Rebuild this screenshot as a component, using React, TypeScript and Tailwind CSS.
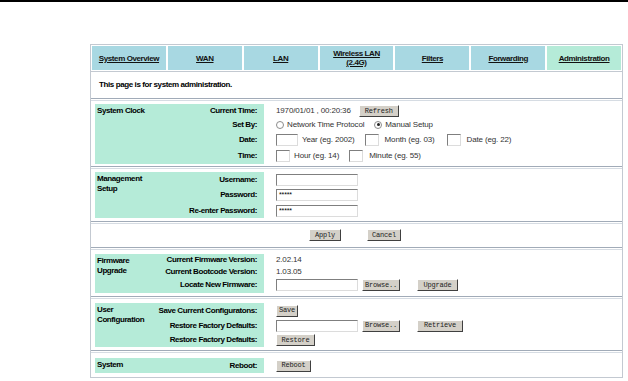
import React from 'react';

type Row = { label: string; h: string; content: React.ReactNode };

const sans = "font-['Liberation_Sans',Arial,sans-serif]";

const Input = ({ w }: { w: string }) => (
  <div className={`${w} h-[12px] bg-white border border-[#7f7f7f] border-b-[#dcdcdc] border-r-[#dcdcdc]`} />
);

const Btn = ({ w, children }: { w: string; children: React.ReactNode }) => (
  <div
    className={`${w} h-[12px] flex items-center justify-center bg-[#d4d0c8] border border-white border-b-[#404040] border-r-[#404040] font-['Liberation_Mono',monospace] text-[7px] leading-none text-[#222] tracking-[-0.2px]`}
  >
    {children}
  </div>
);

const Radio = ({ checked }: { checked?: boolean }) => (
  <span className="w-[8px] h-[8px] rounded-full bg-white border border-[#8c8c8c] flex items-center justify-center">
    {checked && <span className="w-[3px] h-[3px] rounded-full bg-[#222]" />}
  </span>
);

const Sep = () => <div className="h-[3px] border-y border-t-[#a1abb8] border-b-[#d6dce3]" />;

const Section = ({ title, rows, pad }: { title: React.ReactNode; rows: Row[]; pad: string }) => (
  <div className={`flex pl-[4px] ${pad}`}>
    <div className="flex w-[169px] bg-[#b5ebd8]">
      <div className="w-[62px] shrink-0 pl-[2px] pt-[2px] leading-[10px] font-bold text-black">{title}</div>
      <div className="flex-1 min-w-0 flex flex-col pr-[7px]">
        {rows.map((r, i) => (
          <div key={i} className={`${r.h} flex items-center justify-end whitespace-nowrap font-bold text-black`}>
            {r.label}
          </div>
        ))}
      </div>
    </div>
    <div className="flex flex-col pl-[12px]">
      {rows.map((r, i) => (
        <div key={i} className={`${r.h} flex items-center gap-[4px] whitespace-nowrap text-[#333] tracking-[-0.15px]`}>
          {r.content}
        </div>
      ))}
    </div>
  </div>
);

const tabs: { label: React.ReactNode; active?: boolean }[] = [
  { label: 'System Overview' },
  { label: 'WAN' },
  { label: 'LAN' },
  { label: <>Wireless LAN<br />(2.4G)</> },
  { label: 'Filters' },
  { label: 'Forwarding' },
  { label: 'Administration', active: true },
];

export default function App() {
  return (
    <div className={`w-[628px] h-[381px] bg-white overflow-hidden ${sans} text-[8px] tracking-[-0.4px]`}>
      <div className="h-[2px] bg-black" />

      <div className="mt-[42px] ml-[90px] w-[533px]">
        {/* tab bar */}
        <div className="flex h-[28px] border border-[#c3c9d1] bg-white p-px gap-[2px]">
          {tabs.map((t, i) => (
            <div
              key={i}
              className={`flex-1 flex items-center justify-center text-center leading-[9px] font-bold underline text-[#111] ${
                t.active ? 'bg-[#b5ebd8]' : 'bg-[#a8d8e2]'
              }`}
            >
              {t.label}
            </div>
          ))}
        </div>

        <div className="border-x border-b border-[#c3c9d1]">
          <div className="h-[26px] flex items-center pl-[8px] font-bold text-black">
            This page is for system administration.
          </div>
          <Sep />

          <Section
            pad="pt-[3px] pb-[2px]"
            title="System Clock"
            rows={[
              {
                label: 'Current Time:',
                h: 'h-[14px]',
                content: (
                  <>
                    <span>1970/01/01 , 00:20:36</span>
                    <span className="ml-[4px]">
                      <Btn w="w-[40px]">Refresh</Btn>
                    </span>
                  </>
                ),
              },
              {
                label: 'Set By:',
                h: 'h-[13px]',
                content: (
                  <>
                    <Radio />
                    <span className="ml-[-1px]">Network Time Protocol</span>
                    <span className="ml-[6px]">
                      <Radio checked />
                    </span>
                    <span className="ml-[-1px]">Manual Setup</span>
                  </>
                ),
              },
              {
                label: 'Date:',
                h: 'h-[17px]',
                content: (
                  <>
                    <Input w="w-[22px]" />
                    <span>Year (eg. 2002)</span>
                    <span className="ml-[6px]">
                      <Input w="w-[14px]" />
                    </span>
                    <span className="ml-[2px]">Month (eg. 03)</span>
                    <span className="ml-[8px]">
                      <Input w="w-[14px]" />
                    </span>
                    <span className="ml-[2px]">Date (eg. 22)</span>
                  </>
                ),
              },
              {
                label: 'Time:',
                h: 'h-[16px]',
                content: (
                  <>
                    <Input w="w-[14px]" />
                    <span>Hour (eg. 14)</span>
                    <span className="ml-[6px]">
                      <Input w="w-[14px]" />
                    </span>
                    <span className="ml-[2px]">Minute (eg. 55)</span>
                  </>
                ),
              },
            ]}
          />
          <Sep />

          <Section
            pad="pt-[3px] pb-[3px]"
            title={<>Management<br />Setup</>}
            rows={[
              { label: 'Username:', h: 'h-[15px]', content: <Input w="w-[82px]" /> },
              {
                label: 'Password:',
                h: 'h-[16px]',
                content: (
                  <div className="w-[82px] h-[12px] bg-white border border-[#7f7f7f] border-b-[#dcdcdc] border-r-[#dcdcdc] pl-[2px] text-[7px] leading-[10px] text-black">
                    *****
                  </div>
                ),
              },
              {
                label: 'Re-enter Password:',
                h: 'h-[15px]',
                content: (
                  <div className="w-[82px] h-[12px] bg-white border border-[#7f7f7f] border-b-[#dcdcdc] border-r-[#dcdcdc] pl-[2px] text-[7px] leading-[10px] text-black">
                    *****
                  </div>
                ),
              },
            ]}
          />
          <Sep />

          <div className="h-[23px] flex items-start pt-[5px] pl-[218px] gap-[26px]">
            <Btn w="w-[32px]">Apply</Btn>
            <Btn w="w-[34px]">Cancel</Btn>
          </div>
          <Sep />

          <Section
            pad="pt-[4px] pb-[3px]"
            title={<>Firmware<br />Upgrade</>}
            rows={[
              { label: 'Current Firmware Version:', h: 'h-[12px]', content: <span>2.02.14</span> },
              { label: 'Current Bootcode Version:', h: 'h-[11px]', content: <span>1.03.05</span> },
              {
                label: 'Locate New Firmware:',
                h: 'h-[16px]',
                content: (
                  <>
                    <Input w="w-[82px]" />
                    <Btn w="w-[38px]">Browse..</Btn>
                    <span className="ml-[13px]">
                      <Btn w="w-[41px]">Upgrade</Btn>
                    </span>
                  </>
                ),
              },
            ]}
          />
          <Sep />

          <Section
            pad="pt-[4px] pb-[3px]"
            title={<>User<br />Configuration</>}
            rows={[
              { label: 'Save Current Configuratons:', h: 'h-[15px]', content: <Btn w="w-[22px]">Save</Btn> },
              {
                label: 'Restore Factory Defaults:',
                h: 'h-[15px]',
                content: (
                  <>
                    <Input w="w-[82px]" />
                    <Btn w="w-[38px]">Browse..</Btn>
                    <span className="ml-[13px]">
                      <Btn w="w-[46px]">Retrieve</Btn>
                    </span>
                  </>
                ),
              },
              { label: 'Restore Factory Defaults:', h: 'h-[14px]', content: <Btn w="w-[39px]">Restore</Btn> },
            ]}
          />
          <Sep />

          <Section
            pad="pt-[5px] pb-[4px]"
            title="System"
            rows={[{ label: 'Reboot:', h: 'h-[15px]', content: <Btn w="w-[35px]">Reboot</Btn> }]}
          />
        </div>
      </div>
    </div>
  );
}
